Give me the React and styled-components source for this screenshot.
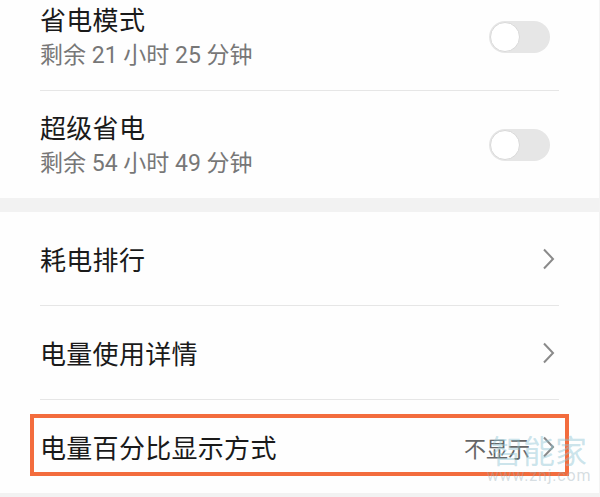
import React from "react";
import styled, { createGlobalStyle } from "styled-components";

const GlobalStyle = createGlobalStyle`
  html, body {
    margin: 0;
    padding: 0;
    background: #ffffff;
  }
  body {
    font-family: "Noto Sans CJK SC", "Noto Sans", sans-serif;
  }
`;

const Screen = styled.div`
  position: relative;
  width: 600px;
  height: 497px;
  overflow: hidden;
  background: #fefefe;
  border-right: 1px solid #f3f3f3;
  box-sizing: border-box;
`;

const Scroller = styled.div`
  margin-top: -17px;
  display: flex;
  flex-direction: column;
`;

const Section = styled.div`
  background: #fefefe;
  display: flex;
  flex-direction: column;
`;

const Gap = styled.div`
  height: ${({ size }) => size}px;
  background: #f2f2f2;
  flex-shrink: 0;
`;

const Row = styled.div`
  position: relative;
  display: flex;
  align-items: center;
  justify-content: space-between;
  margin: 0 40px;
  box-sizing: border-box;
  height: ${({ tall, last }) => (tall ? 107 : 93) + (last ? 0 : 1)}px;
  border-bottom: ${({ last }) => (last ? "none" : "1px solid #e6e6e6")};
`;

const TextBlock = styled.div`
  display: flex;
  flex-direction: column;
`;

const Title = styled.div`
  font-size: 26px;
  line-height: 34px;
  color: #1a1a1a;
  letter-spacing: 0.3px;
`;

const Subtitle = styled.div`
  margin-top: 5px;
  font-size: 23px;
  line-height: 30px;
  color: #777777;
  font-family: "Roboto", "Noto Sans CJK SC", sans-serif;
`;

const Track = styled.div`
  position: relative;
  width: 61px;
  height: 32px;
  margin-right: 9px;
  border-radius: 16px;
  background: #e6e6e6;
  flex-shrink: 0;
`;

const Knob = styled.div`
  position: absolute;
  left: 1px;
  top: 1px;
  width: 28px;
  height: 28px;
  border-radius: 50%;
  background: #ffffff;
  border: 1px solid #d9d9d9;
`;

const Trailing = styled.div`
  display: flex;
  align-items: center;
  gap: 12px;
  margin-right: 4px;
`;

const Value = styled.span`
  font-size: 22px;
  color: #666666;
`;

const Highlight = styled.div`
  position: absolute;
  left: -10px;
  right: -10px;
  top: 14px;
  height: 62px;
  border: 4px solid #f36c3d;
  box-sizing: border-box;
  pointer-events: none;
`;

const Watermark = styled.div`
  position: absolute;
  left: 490px;
  top: 431px;
  width: 98px;
  display: flex;
  flex-direction: column;
  align-items: center;
  pointer-events: none;
`;

const MarkName = styled.span`
  font-size: 32px;
  line-height: 36px;
  color: rgba(140, 196, 212, 0.45);
`;

const MarkUrl = styled.span`
  font-family: "Roboto", "Noto Sans", sans-serif;
  font-size: 16px;
  line-height: 18px;
  letter-spacing: 0.8px;
  color: rgba(150, 170, 180, 0.4);
`;

const Chevron = () => (
  <svg width="13" height="22" viewBox="0 0 13 22">
    <path d="M2 1.5 L11 11 L2 20.5" fill="none" stroke="#8a8a8a" strokeWidth="2" />
  </svg>
);

const Toggle = () => (
  <Track>
    <Knob />
  </Track>
);

const switches = [
  { title: "省电模式", sub: "剩余 21 小时 25 分钟" },
  { title: "超级省电", sub: "剩余 54 小时 49 分钟" },
];

const links = [
  { title: "耗电排行" },
  { title: "电量使用详情" },
  { title: "电量百分比显示方式", value: "不显示", marked: true },
];

export default function App() {
  return (
    <>
      <GlobalStyle />
      <Screen>
        <Scroller>
          <Section>
            {switches.map((s, i) => (
              <Row key={s.title} tall last={i === switches.length - 1}>
                <TextBlock>
                  <Title>{s.title}</Title>
                  <Subtitle>{s.sub}</Subtitle>
                </TextBlock>
                <Toggle />
              </Row>
            ))}
          </Section>
          <Gap size={14} />
          <Section>
            {links.map((l, i) => (
              <Row key={l.title} last={i === links.length - 1}>
                <Title>{l.title}</Title>
                <Trailing>
                  {l.value && <Value>{l.value}</Value>}
                  <Chevron />
                </Trailing>
                {l.marked && <Highlight />}
              </Row>
            ))}
          </Section>
          <Gap size={20} />
        </Scroller>
        <Watermark>
          <MarkName>智能家</MarkName>
          <MarkUrl>www.znj.com</MarkUrl>
        </Watermark>
      </Screen>
    </>
  );
}
